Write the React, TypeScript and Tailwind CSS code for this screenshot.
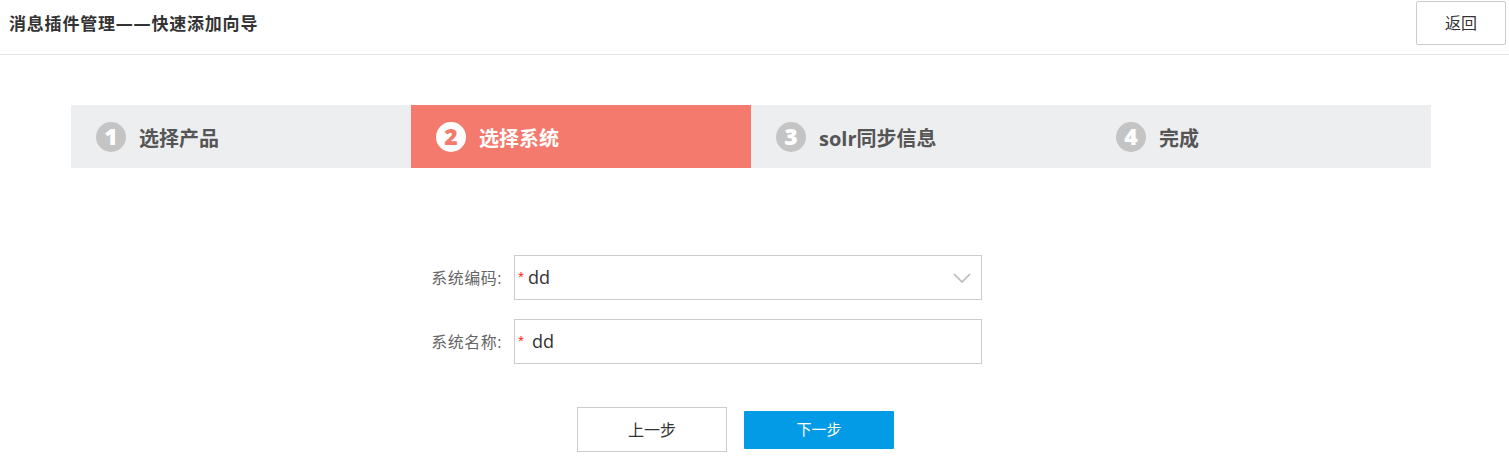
const font = "font-['Open_Sans','Noto_Sans_CJK_SC',sans-serif]"

const steps = [
  { n: 1, label: "选择产品" },
  { n: 2, label: "选择系统" },
  { n: 3, label: "solr同步信息" },
  { n: 4, label: "完成" },
]

const current = 2

const Header = () => {
  return (
    <header className="h-[55px] border-b border-[#e8e8e8] flex items-start justify-between">
      <h1 className="pl-[9px] pt-[12px] text-[17px] font-bold text-[#333] leading-[24px] tracking-[0.8px]">
        消息插件管理——快速添加向导
      </h1>
      <button className="mt-[1px] mr-[3px] w-[90px] h-[44px] border border-[#cccccc] bg-white text-[16px] text-[#333] rounded-[2px]">
        返回
      </button>
    </header>
  )
}

const Steps = () => {
  return (
    <div className="mt-[50px] ml-[71px] w-[1360px] h-[63px] flex bg-[#edeef0]">
      {steps.map((s) => {
        const active = s.n === current
        return (
          <div
            key={s.n}
            className={`w-[340px] h-full flex items-center pl-[25px] ${active ? "bg-[#f47a6d]" : "bg-[#edeef0]"}`}
          >
            <span
              className={`w-[30px] h-[30px] rounded-full flex items-center justify-center text-[23px] font-extrabold leading-none ${
                active ? "bg-white text-[#f47a6d]" : "bg-[#c4c4c4] text-white"
              }`}
            >
              {s.n}
            </span>
            <span className={`ml-[13px] pt-[5px] text-[20px] font-bold ${active ? "text-white" : "text-[#555]"}`}>
              {s.label}
            </span>
          </div>
        )
      })}
    </div>
  )
}

const Field = ({ label, value, select }: { label: string; value: string; select?: boolean }) => {
  return (
    <div className="flex items-center">
      <label className="w-[90px] text-right text-[16px] text-[#666] tracking-[0.5px] pr-[1px]">{label}</label>
      <div className="ml-[11px] w-[468px] h-[45px] border border-[#cccccc] bg-white flex items-center pl-[3px] pr-[10px]">
        <span className="text-[#f00] text-[11px] leading-none mt-[-4px]">*</span>
        <span className={`${select ? "ml-[4px]" : "ml-[8px]"} text-[18px] text-[#333]`}>{value}</span>
        {select && (
          <svg className="ml-auto" width="18" height="10" viewBox="0 0 18 10">
            <polyline points="1,1 9,9 17,1" fill="none" stroke="#b8b8b8" strokeWidth="1.6" />
          </svg>
        )}
      </div>
    </div>
  )
}

export default function App() {
  return (
    <div className={`${font} w-[1509px] h-[458px] bg-white overflow-hidden`}>
      <Header />
      <Steps />
      <div className="mt-[87px] ml-[413px] flex flex-col gap-[19px]">
        <Field label="系统编码:" value="dd" select />
        <Field label="系统名称:" value="dd" />
      </div>
      <div className="mt-[43px] ml-[577px] flex items-center gap-[17px]">
        <button className="w-[150px] h-[45px] border border-[#cccccc] bg-white text-[16px] text-[#333]">
          上一步
        </button>
        <button className="w-[150px] h-[38px] bg-[#039be5] text-[15px] text-white rounded-[1px]">
          下一步
        </button>
      </div>
    </div>
  )
}
